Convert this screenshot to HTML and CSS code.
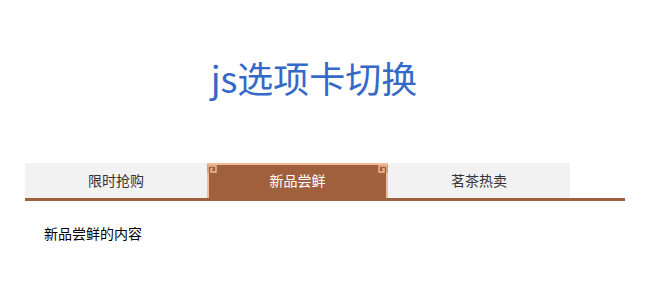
FILE: index.html
```html
<!DOCTYPE html>
<html lang="zh-CN">
<head>
  <meta charset="UTF-8" />
  <title>js选项卡切换</title>
  <link rel="stylesheet" href="styles.css">
</head>
<body>
  <div class="container">
    <h1>js选项卡切换</h1>
    <div class="tabs">
      <ul class="tab-nav">
        <li class="tab">限时抢购</li>
        <li class="tab active">
          <svg class="corner left" width="10" height="10" viewBox="0 0 10 10"><path d="M1 10 V1 H9 V7 H4 V4 H6" fill="none" stroke="#f2bd98" stroke-width="1.4"/></svg>
          新品尝鲜
          <svg class="corner right" width="10" height="10" viewBox="0 0 10 10"><path d="M9 10 V1 H1 V7 H6 V4 H4" fill="none" stroke="#f2bd98" stroke-width="1.4"/></svg>
        </li>
        <li class="tab">茗茶热卖</li>
      </ul>
      <div class="tab-body">
        <p>新品尝鲜的内容</p>
      </div>
    </div>
  </div>
</body>
</html>
```

FILE: styles.css
```css
* { box-sizing: border-box; }

body {
  margin: 0;
  font-family: "Noto Sans CJK SC", "Liberation Sans", sans-serif;
  background: #ffffff;
  color: #000;
}

.container {
  width: 600px;
  margin: 0 auto;
}

h1 {
  margin: 0;
  padding-top: 52px;
  padding-right: 22px;
  height: 163px;
  text-align: center;
  font-size: 36px;
  font-weight: normal;
  line-height: 50px;
  color: #3569c8;
}

.tab-nav {
  display: flex;
  margin: 0;
  padding: 0;
  list-style: none;
  border-bottom: 3px solid #a1603d;
}

.tab {
  position: relative;
  width: 182px;
  height: 35px;
  line-height: 35px;
  text-align: center;
  font-size: 14px;
  color: #333;
  background: #f2f2f2;
}

.tab.active {
  width: 181px;
  color: #fff;
  background: #a1603d;
  border-top: 2px solid #f2bd98;
  line-height: 31px;
}

.tab.active::before,
.tab.active::after {
  content: "";
  position: absolute;
  top: 8px;
  bottom: 0;
  width: 2px;
  background: #f2bd98;
}

.tab.active::before { left: 0; }
.tab.active::after { right: 0; }

.corner {
  position: absolute;
  top: 0;
}

.corner.left { left: 0; }
.corner.right { right: 0; }

.tab-body {
  padding: 22px 19px;
  font-size: 14px;
}

.tab-body p {
  margin: 0;
  line-height: 20px;
}
```
